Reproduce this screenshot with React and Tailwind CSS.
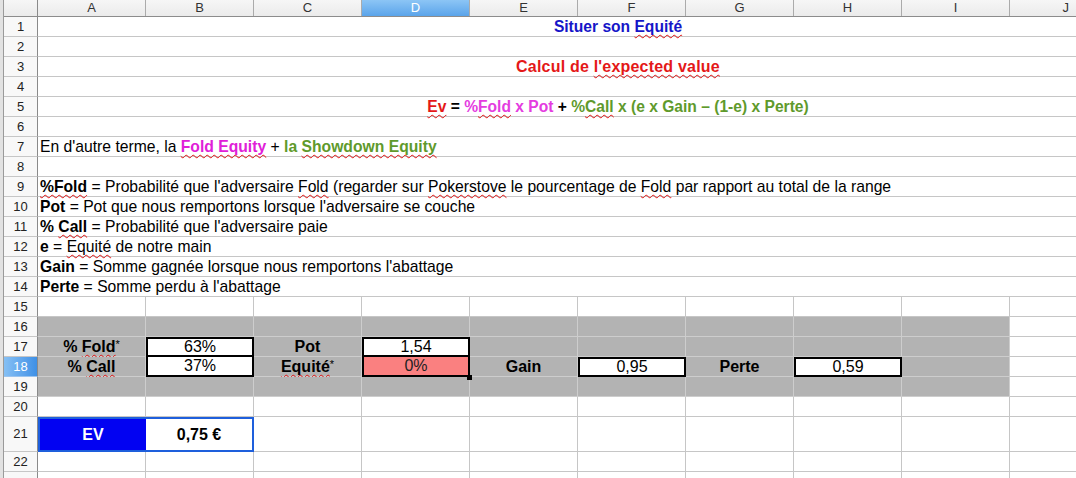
import React from 'react';

const Sq = ({ children }) => (
  <span className="underline decoration-wavy decoration-[#e01010] decoration-1 underline-offset-[2px] [text-decoration-skip-ink:none]">{children}</span>
);

const RowHead = ({ n, active, h }) => (
  <div
    className={
      'w-[34px] shrink-0 border-r border-r-[#8a8a8a] border-b flex items-center justify-center text-[13px] ' +
      (active
        ? 'bg-gradient-to-r from-[#86c0f4] to-[#3e90e6] text-white border-b-[#9cc4ee]'
        : 'bg-[#f8f8f8] text-[#222] border-b-[#c6c6c6]') +
      ' ' + h
    }
  >
    {n}
  </div>
);

const Row = ({ n, active, tall, children }) => (
  <div className={'flex shrink-0 ' + (tall ? 'h-[35px]' : 'h-[20px]')}>
    <RowHead n={n} active={active} h={tall ? 'h-[35px]' : 'h-[20px]'} />
    {children}
  </div>
);

const Merged = ({ children, center }) => (
  <div className="flex-1 border-b border-[#c6c6c6] flex items-center">
    {center ? (
      <div className="w-[1160px] shrink-0 text-center whitespace-nowrap font-bold text-[15.6px] leading-[19px]">{children}</div>
    ) : (
      <div className="pl-[2px] whitespace-nowrap text-[15.7px] leading-[19px] text-black">{children}</div>
    )}
  </div>
);

const C = ({ className = '', children }) => (
  <div className={'w-[108px] shrink-0 flex items-center justify-center text-[16px] ' + className}>{children}</div>
);

const W = 'border-r border-b border-[#c6c6c6] bg-white';
const G = 'border-r border-b border-[#cdcdcd] bg-[#b3b3b3]';
const J = () => <div className="flex-1 border-b border-[#c6c6c6] bg-white" />;

const Grays = ({ n }) => (
  <>
    {Array.from({ length: n }).map((_, i) => (
      <C key={i} className={G} />
    ))}
  </>
);

const Whites = ({ n }) => (
  <>
    {Array.from({ length: n }).map((_, i) => (
      <C key={i} className={W} />
    ))}
  </>
);

export default function App() {
  const cols = ['A', 'B', 'C', 'D', 'E', 'F', 'G', 'H', 'I'];
  return (
    <div className="w-[1076px] h-[478px] overflow-hidden bg-white flex font-['Liberation_Sans',Arial,sans-serif] text-black">
      <div className="w-[4px] shrink-0 bg-[#e2e2e2] border-r border-[#9a9a9a]" />
      <div className="flex-1 flex flex-col overflow-hidden">
        {/* column headers */}
        <div className="flex h-[17px] shrink-0 border-b border-[#8c8c8c] bg-gradient-to-b from-[#f6f6f6] to-[#ebebeb]">
          <div className="w-[34px] shrink-0 border-r border-[#8a8a8a]" />
          {cols.map((c) => (
            <div
              key={c}
              className={
                'w-[108px] shrink-0 border-r border-[#ababab] flex items-center justify-center text-[13px] ' +
                (c === 'D' ? 'bg-gradient-to-b from-[#8cc5f5] to-[#5aa4ea] text-white' : 'text-[#333]')
              }
            >
              {c}
            </div>
          ))}
          <div className="flex-1 flex items-center justify-end pr-[7px] text-[13px] text-[#333]">J</div>
        </div>

        <Row n={1}>
          <Merged center>
            <span className="text-[#1616c8]">
              Situer son <Sq>Equité</Sq>
            </span>
          </Merged>
        </Row>
        <Row n={2}><Merged /></Row>
        <Row n={3}>
          <Merged center>
            <span className="text-[#e41818] text-[16px] tracking-[0.2px]">
              Calcul de <Sq>l'expected value</Sq>
            </span>
          </Merged>
        </Row>
        <Row n={4}><Merged /></Row>
        <Row n={5}>
          <Merged center>
            <span className="text-[#e41818]"><Sq>Ev</Sq></span>
            <span> = </span>
            <span className="text-[#e43ce0]">%<Sq>Fold</Sq> x Pot</span>
            <span> + </span>
            <span className="text-[#5f9a2c]">%<Sq>Call</Sq> x (e x Gain – (1-e) x Perte)</span>
          </Merged>
        </Row>
        <Row n={6}><Merged /></Row>
        <Row n={7}>
          <Merged>
            En d'autre terme, la{' '}
            <span className="font-bold text-[#e020d8]"><Sq>Fold Equity</Sq></span> +{' '}
            <span className="font-bold text-[#5f9a2c]">la <Sq>Showdown Equity</Sq></span>
          </Merged>
        </Row>
        <Row n={8}><Merged /></Row>
        <Row n={9}>
          <Merged>
            <b><Sq>%Fold</Sq></b> = Probabilité que l'adversaire <Sq>Fold</Sq> (regarder sur <Sq>Pokerstove</Sq> le pourcentage de <Sq>Fold</Sq> par rapport au total de la range
          </Merged>
        </Row>
        <Row n={10}>
          <Merged>
            <b>Pot</b> = Pot que nous remportons lorsque l'adversaire se couche
          </Merged>
        </Row>
        <Row n={11}>
          <Merged>
            <b>% <Sq>Call</Sq></b> = Probabilité que l'adversaire paie
          </Merged>
        </Row>
        <Row n={12}>
          <Merged>
            <b>e</b> = <Sq>Equité</Sq> de notre main
          </Merged>
        </Row>
        <Row n={13}>
          <Merged>
            <b>Gain</b> = Somme gagnée lorsque nous remportons l'abattage
          </Merged>
        </Row>
        <Row n={14}>
          <Merged>
            <b>Perte</b> = Somme perdu à l'abattage
          </Merged>
        </Row>

        <Row n={15}>
          <Whites n={9} />
          <J />
        </Row>
        <Row n={16}>
          <Grays n={9} />
          <J />
        </Row>
        <Row n={17}>
          <C className={G + ' font-bold'}>
            <span>% <Sq>Fold</Sq><sup className="font-normal text-[11px] -top-[4px]">*</sup></span>
          </C>
          <C className="bg-white border-2 border-black">63%</C>
          <C className={G + ' font-bold'}>Pot</C>
          <C className="bg-white border-2 border-black">1,54</C>
          <Grays n={5} />
          <J />
        </Row>
        <Row n={18} active>
          <C className={G + ' font-bold'}>
            <span>% <Sq>Call</Sq></span>
          </C>
          <C className="bg-white border-x-2 border-b-2 border-black">37%</C>
          <C className={G + ' font-bold'}>
            <span><Sq>Equité</Sq><sup className="font-normal text-[11px] -top-[4px]">*</sup></span>
          </C>
          <C className="relative bg-[#fa8080] border-x-2 border-b-2 border-black text-[#222]">
            0%
            <div className="absolute -right-[4px] -bottom-[5px] w-[5px] h-[5px] bg-black z-10" />
          </C>
          <C className={G + ' font-bold'}>Gain</C>
          <C className="bg-white border-2 border-black text-[15px]">0,95</C>
          <C className={G + ' font-bold'}>Perte</C>
          <C className="bg-white border-2 border-black text-[15px]">0,59</C>
          <Grays n={1} />
          <J />
        </Row>
        <Row n={19}>
          <Grays n={9} />
          <J />
        </Row>
        <Row n={20}>
          <Whites n={9} />
          <J />
        </Row>
        <Row n={21} tall>
          <div className="w-[216px] shrink-0 border-2 border-[#1e5fdc] flex">
            <div className="w-[106px] shrink-0 bg-[#0202f2] text-white font-bold flex items-center justify-center text-[16px]">EV</div>
            <div className="flex-1 bg-white font-bold flex items-center justify-center text-[16px]">0,75 €</div>
          </div>
          <Whites n={7} />
          <J />
        </Row>
        <Row n={22}>
          <Whites n={9} />
          <J />
        </Row>
        <Row n="">
          <Whites n={9} />
          <J />
        </Row>
      </div>
    </div>
  );
}
